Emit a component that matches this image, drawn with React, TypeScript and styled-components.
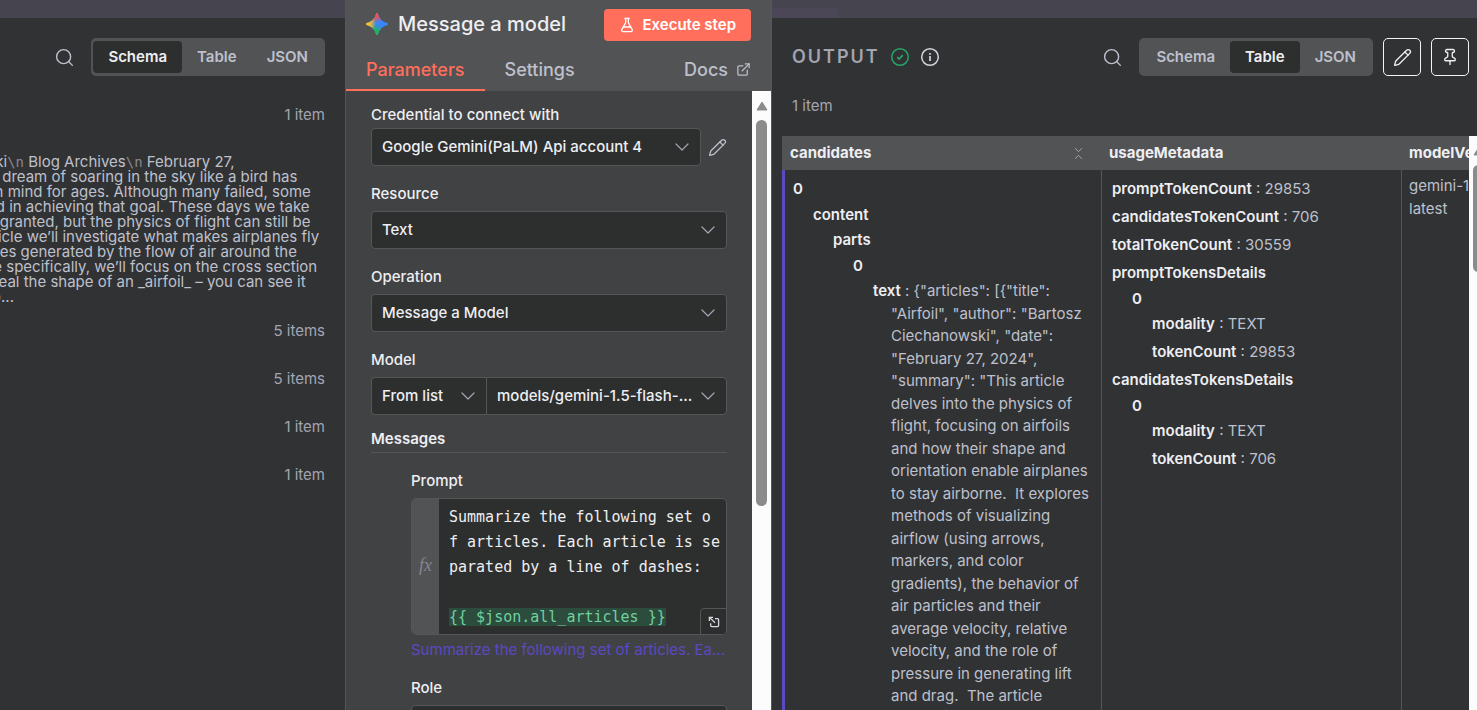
import React from "react";
import styled, { createGlobalStyle } from "styled-components";
import {
  ChevronDown,
  ChevronsDownUp,
  ExternalLink,
  FlaskConical,
  Pencil,
  Pin,
  Search,
} from "lucide-react";

const color = {
  canvas: "#45444f",
  panel: "#313234",
  node: "#414244",
  raised: "#525355",
  field: "#2d2e2e",
  line: "#555658",
  text: "#eeeef2",
  muted: "#bec0cc",
  faint: "#a3a5b1",
  primary: "#ff6f5c",
  purple: "#5b49c2",
};

const GlobalStyle = createGlobalStyle`
  * { box-sizing: border-box; }
  body {
    margin: 0;
    background: ${color.canvas};
    color: ${color.text};
    font: 400 15px/20px Inter, sans-serif;
    overflow: hidden;
  }
  button, select { font: inherit; color: inherit; }
`;

const Page = styled.main`
  display: flex;
  height: 100vh;
  overflow: hidden;
`;

const SidePanel = styled.section<{ $grow: number }>`
  flex: ${(p) => p.$grow} 1 0;
  min-width: 0;
  display: flex;
  flex-direction: column;
  overflow: hidden;
`;

const CanvasStrip = styled.div`
  flex: none;
  height: 18px;
  padding-top: 8px;
  background: ${color.canvas};
`;

const CanvasTab = styled.div`
  width: 67px;
  height: 10px;
  border-top-right-radius: 4px;
  background: #4b4757;
`;

const PanelBody = styled.div`
  flex: 1;
  min-height: 0;
  display: flex;
  flex-direction: column;
  background: ${color.panel};
`;

const Toolbar = styled.header`
  display: flex;
  align-items: center;
  justify-content: flex-end;
  gap: 10px;
  padding: 20px 20px 0 0;
`;

const OutputToolbar = styled(Toolbar)`
  padding: 20px 8px 0 20px;
`;

const OutputTitle = styled.h2`
  margin: 0;
  font-size: 18px;
  font-weight: 600;
  letter-spacing: 2px;
  color: ${color.faint};
`;

const Spacer = styled.div`
  flex: 1;
`;

const IconButton = styled.button<{ $outlined?: boolean }>`
  display: flex;
  align-items: center;
  justify-content: center;
  width: ${(p) => (p.$outlined ? 38 : 34)}px;
  height: 38px;
  padding: 0;
  border: 1px solid ${(p) => (p.$outlined ? "#f4f4f6" : "transparent")};
  border-radius: 5px;
  background: none;
  color: ${(p) => (p.$outlined ? color.text : color.muted)};
`;

const Segmented = styled.div`
  display: flex;
  padding: 3px 2px;
  border-radius: 5px;
  background: ${color.raised};
`;

const Segment = styled.button<{ $active?: boolean }>`
  height: 32px;
  padding: 0 15px;
  border: 0;
  border-radius: 4px;
  background: ${(p) => (p.$active ? color.field : "transparent")};
  color: ${(p) => (p.$active ? color.text : color.muted)};
  font-weight: 600;
`;

const InputContent = styled.div`
  display: flex;
  flex-direction: column;
  padding: 29px 20px 0 0;
`;

const ItemCount = styled.span`
  align-self: flex-end;
  color: ${color.faint};
`;

const Excerpt = styled.p`
  margin: 29px 0 17px -150px;
  line-height: 15px;
  white-space: pre;
  color: ${color.muted};
`;

const Escape = styled.span`
  color: #87888c;
  font: 14px/1px "DejaVu Sans Mono", monospace;
`;

const CountList = styled.ul`
  display: flex;
  flex-direction: column;
  gap: 28px;
  margin: 0;
  padding: 0;
  list-style: none;
`;

const CountRow = styled.li`
  display: flex;
  flex-direction: column;
`;

const NodePanel = styled.section`
  flex: 425 1 0;
  min-width: 0;
  display: flex;
  flex-direction: column;
  border: solid ${color.line};
  border-width: 0 1px;
  background: ${color.node};
`;

const NodeHeader = styled.header`
  background: ${color.raised};
`;

const TitleRow = styled.div`
  display: flex;
  align-items: center;
  justify-content: space-between;
  height: 50px;
  padding: 0 20px;
`;

const TitleGroup = styled.div`
  display: flex;
  align-items: center;
  gap: 10px;
  padding-bottom: 3px;
`;

const NodeTitle = styled.h1`
  margin: 0;
  font-size: 20px;
  line-height: 24px;
  font-weight: 500;
`;

const ExecuteButton = styled.button`
  display: flex;
  align-items: center;
  gap: 7px;
  height: 32px;
  padding: 0 15px;
  border: 0;
  border-radius: 4px;
  background: ${color.primary};
  color: #fff;
  font-weight: 600;
`;

const TabRow = styled.nav`
  display: flex;
  align-items: stretch;
  justify-content: space-between;
  height: 41px;
`;

const Tab = styled.a<{ $active?: boolean }>`
  display: flex;
  align-items: center;
  gap: 8px;
  padding: 0 20px;
  border-bottom: 2px solid ${(p) => (p.$active ? color.primary : "transparent")};
  color: ${(p) => (p.$active ? color.primary : color.muted)};
  font-size: 18px;
  font-weight: 500;
  text-decoration: none;
`;

const TabGroup = styled.div`
  display: flex;
`;

const NodeScroll = styled.div`
  flex: 1;
  min-height: 0;
  display: flex;
`;

const Form = styled.form`
  flex: 1;
  min-width: 0;
  display: flex;
  flex-direction: column;
  gap: 18px;
  padding: 14px 25px 0;
  overflow: hidden;
`;

const Field = styled.div<{ $gap?: number }>`
  flex: none;
  display: flex;
  flex-direction: column;
  gap: ${(p) => p.$gap ?? 7}px;
`;

const Label = styled.label`
  align-self: flex-start;
  font-weight: 500;
`;

const ControlRow = styled.div`
  display: flex;
  align-items: center;
`;

const SelectShell = styled.div<{ $width?: number; $join?: "left" | "right" }>`
  flex: ${(p) => (p.$width ? `0 0 ${p.$width}px` : "1 1 0")};
  min-width: 0;
  display: grid;
  align-items: center;
  height: 38px;
  border: 1px solid ${color.line};
  border-right-width: ${(p) => (p.$join === "left" ? 0 : 1)}px;
  border-radius: ${(p) =>
    p.$join === "left" ? "4px 0 0 4px" : p.$join === "right" ? "0 4px 4px 0" : "4px"};
  background: ${color.field};

  & > * { grid-area: 1 / 1; }
  & > svg {
    justify-self: end;
    margin-right: 6px;
    color: ${color.faint};
    pointer-events: none;
  }
`;

const NativeSelect = styled.select`
  appearance: none;
  width: 100%;
  height: 100%;
  padding: 0 30px 0 10px;
  border: 0;
  background: transparent;
  color: ${color.text};
  font-weight: 500;
  outline: none;
`;

const PencilButton = styled.button`
  display: flex;
  margin: 0 0 0 7px;
  padding: 0;
  border: 0;
  background: none;
  color: ${color.muted};
`;

const SectionTitle = styled.h3`
  flex: none;
  margin: -4px 0 0;
  padding-bottom: 3px;
  border-bottom: 1px solid ${color.line};
  font-size: 15px;
  line-height: 20px;
  font-weight: 600;
`;

const Nested = styled.div`
  display: flex;
  flex-direction: column;
  gap: 18px;
  padding-left: 40px;
`;

const EditorBox = styled.div`
  position: relative;
  display: flex;
  height: 137px;
  border: 1px solid ${color.line};
  border-radius: 5px;
  background: ${color.field};
  overflow: hidden;
`;

const Gutter = styled.div`
  flex: 0 0 27px;
  display: flex;
  align-items: center;
  justify-content: center;
  padding-bottom: 3px;
  background: ${color.raised};
  color: #858691;
  font: italic 18px/20px "Liberation Serif", serif;
`;

const Editor = styled.div`
  flex: 1;
  min-width: 0;
  padding: 6px 0 0 10px;
  font: 15px/25px "DejaVu Sans Mono", monospace;
  white-space: pre;
  outline: none;
`;

const Expression = styled.span`
  background: #2c4c3e;
  color: #71d0a0;
`;

const ExpandButton = styled.button`
  position: absolute;
  right: -1px;
  bottom: -1px;
  display: flex;
  align-items: center;
  justify-content: center;
  width: 27px;
  height: 27px;
  padding: 0;
  border: 1px solid ${color.line};
  border-top-left-radius: 4px;
  background: ${color.field};
`;

const Hint = styled.p`
  margin: -2px 0 0;
  overflow: hidden;
  white-space: nowrap;
  color: ${color.purple};
`;

const ScrollTrack = styled.div`
  flex: 0 0 19px;
  display: flex;
  flex-direction: column;
  align-items: center;
  padding-top: 10px;
  background: #fcfcfc;
`;

const ScrollThumb = styled.div<{ $size: number }>`
  width: 11px;
  height: ${(p) => p.$size}px;
  margin-top: 9px;
  border-radius: 6px;
  background: #8b8b8b;
`;

const OutputCount = styled.p`
  margin: 20px 0 20px 20px;
  color: ${color.faint};
`;

const TableArea = styled.div`
  flex: 1;
  min-height: 0;
  display: flex;
  margin-left: 10px;
`;

const TableClip = styled.div`
  flex: 1;
  min-width: 0;
  overflow: hidden;
`;

const ScrollClip = styled.div`
  flex: 0 0 8px;
  display: flex;
  overflow: hidden;
`;

const DataTable = styled.table`
  table-layout: fixed;
  width: 919px;
  height: 100%;
  border-collapse: separate;
  border-spacing: 0;
  line-height: 1.5;
`;

const HeadCell = styled.th`
  height: 34px;
  padding: 0 8px;
  background: ${color.raised};
  text-align: left;
  font-weight: 700;
`;

const HeadRow = styled.div`
  display: flex;
  align-items: center;
  justify-content: space-between;
  padding-right: 7px;

  svg { color: ${color.faint}; }
`;

const Cell = styled.td<{ $accent?: boolean }>`
  padding: 5px 8px 0 ${(p) => (p.$accent ? 5 : 7)}px;
  border-left: ${(p) => (p.$accent ? `3px solid ${color.purple}` : `1px solid ${color.line}`)};
  vertical-align: top;
  color: ${color.muted};
`;

const Branch = styled.div<{ $indent?: boolean }>`
  padding-left: ${(p) => (p.$indent ? 20 : 0)}px;
`;

const TreeKey = styled.div`
  padding: 3px 0 0 3px;
  color: ${color.text};
  font-weight: 600;
`;

const TreeLeaf = styled.div<{ $prose?: boolean }>`
  margin-left: 21px;
  padding: 3px 0;
  line-height: ${(p) => (p.$prose ? "inherit" : "22px")};
  text-indent: -18px;
  white-space: pre-wrap;

  b { color: ${color.text}; font-weight: 600; }
`;

const ARTICLE =
  '{"articles": [{"title": "Airfoil", "author": "Bartosz Ciechanowski", "date": "February 27, 2024", "summary": "This article delves into the physics of flight, focusing on airfoils and how their shape and orientation enable airplanes to stay airborne.  It explores methods of visualizing airflow (using arrows, markers, and color gradients), the behavior of air particles and their average velocity, relative velocity, and the role of pressure in generating lift and drag.  The article';

type TreeNode = { name: string; value?: string; children?: TreeNode[] };

const CANDIDATES: TreeNode[] = [
  {
    name: "0",
    children: [
      {
        name: "content",
        children: [
          {
            name: "parts",
            children: [{ name: "0", children: [{ name: "text", value: ARTICLE }] }],
          },
        ],
      },
    ],
  },
];

const USAGE: TreeNode[] = [
  { name: "promptTokenCount", value: "29853" },
  { name: "candidatesTokenCount", value: "706" },
  { name: "totalTokenCount", value: "30559" },
  {
    name: "promptTokensDetails",
    children: [
      {
        name: "0",
        children: [
          { name: "modality", value: "TEXT" },
          { name: "tokenCount", value: "29853" },
        ],
      },
    ],
  },
  {
    name: "candidatesTokensDetails",
    children: [
      {
        name: "0",
        children: [
          { name: "modality", value: "TEXT" },
          { name: "tokenCount", value: "706" },
        ],
      },
    ],
  },
];

function Tree({ nodes, indent }: { nodes: TreeNode[]; indent?: boolean }) {
  return (
    <Branch $indent={indent}>
      {nodes.map((node) =>
        node.children ? (
          <React.Fragment key={node.name}>
            <TreeKey>{node.name}</TreeKey>
            <Tree nodes={node.children} indent />
          </React.Fragment>
        ) : (
          <TreeLeaf key={node.name} $prose={(node.value ?? "").length > 40}>
            <b>{node.name}</b>
            {` : ${node.value}`}
          </TreeLeaf>
        )
      )}
    </Branch>
  );
}

function ViewSwitch({ active }: { active: string }) {
  return (
    <Segmented>
      {["Schema", "Table", "JSON"].map((view) => (
        <Segment key={view} type="button" $active={view === active}>
          {view}
        </Segment>
      ))}
    </Segmented>
  );
}

function Select(props: {
  id: string;
  value: string;
  label?: string;
  width?: number;
  join?: "left" | "right";
}) {
  return (
    <SelectShell $width={props.width} $join={props.join}>
      <NativeSelect id={props.id} aria-label={props.label}>
        <option>{props.value}</option>
      </NativeSelect>
      <ChevronDown size={24} strokeWidth={1.2} />
    </SelectShell>
  );
}

function Scrollbar({ size }: { size: number }) {
  return (
    <ScrollTrack>
      <svg width="12" height="10" viewBox="0 0 12 10">
        <path d="M6 1 11 9H1Z" fill="#8b8b8b" stroke="#8b8b8b" strokeLinejoin="round" />
      </svg>
      <ScrollThumb $size={size} />
    </ScrollTrack>
  );
}

function GeminiLogo() {
  const star = "M12 0Q14.2 9.8 24 12Q14.2 14.2 12 24Q9.8 14.2 0 12Q9.8 9.8 12 0Z";
  return (
    <svg width="22" height="22" viewBox="0 0 24 24" aria-hidden="true">
      <defs>
        <radialGradient id="gTop" gradientUnits="userSpaceOnUse" cx="10" cy="0" r="11">
          <stop offset="0.35" stopColor="#f0524a" />
          <stop offset="1" stopColor="#f0524a" stopOpacity="0" />
        </radialGradient>
        <radialGradient id="gLeft" gradientUnits="userSpaceOnUse" cx="0" cy="11" r="11">
          <stop offset="0.4" stopColor="#f6c026" />
          <stop offset="1" stopColor="#f6c026" stopOpacity="0" />
        </radialGradient>
        <radialGradient id="gBottom" gradientUnits="userSpaceOnUse" cx="9" cy="23" r="11">
          <stop offset="0.4" stopColor="#22b357" />
          <stop offset="1" stopColor="#22b357" stopOpacity="0" />
        </radialGradient>
      </defs>
      {["#3a86f7", "url(#gBottom)", "url(#gTop)", "url(#gLeft)"].map((fill) => (
        <path key={fill} d={star} fill={fill} stroke={fill} strokeWidth="1.4" strokeLinejoin="round" />
      ))}
    </svg>
  );
}

function SuccessIcon() {
  return (
    <svg width="20" height="20" viewBox="0 0 20 20" fill="none" stroke="#26a566" strokeWidth="1.5" role="img" aria-label="Success">
      <circle cx="10" cy="10" r="8.3" />
      <path d="m7.2 10.2 1.9 1.8 3.7-3.8" strokeWidth="1.7" />
    </svg>
  );
}

function InfoIcon() {
  return (
    <svg width="20" height="20" viewBox="0 0 20 20" fill="none" stroke="#d3d4dc" strokeWidth="1.5" role="img" aria-label="Info">
      <circle cx="10" cy="10" r="8.3" />
      <path d="M10 9v5M10 6v1.8" strokeWidth="1.7" />
    </svg>
  );
}

function ExpandIcon() {
  return (
    <svg width="12" height="12" viewBox="0 0 12 12" fill="none" stroke="#d8d9e0" strokeWidth="1.3" aria-hidden="true">
      <path d="M7 2.7h2.6a1 1 0 0 1 1 1v5.9a1 1 0 0 1-1 1H3.7a1 1 0 0 1-1-1V7.2" />
      <path d="M1.8 1.6 7 6.8M1.4 5V1.3h3.7" />
    </svg>
  );
}

function InputPanel() {
  return (
    <SidePanel $grow={345}>
      <CanvasStrip />
      <PanelBody>
        <Toolbar>
          <IconButton type="button" aria-label="Search input">
            <Search size={21} strokeWidth={1.6} />
          </IconButton>
          <ViewSwitch active="Schema" />
        </Toolbar>
        <InputContent>
          <ItemCount>1 item</ItemCount>
          <Excerpt>
            Bartosz Ciechanowski<Escape>\n</Escape> Blog Archives<Escape>\n</Escape> February 27,{"\n"}
            2024<Escape>\n</Escape> Airfoil<Escape>\n</Escape> The dream of soaring in the sky like a bird has{"\n"}
            captivated the human mind for ages. Although many failed, some{"\n"}
            eventually succeeded in achieving that goal. These days we take{"\n"}
            air transportation for granted, but the physics of flight can still be{"\n"}
            mystifying. In this article we’ll investigate what makes airplanes fly{"\n"}
            by looking at the forces generated by the flow of air around the{"\n"}
            aircraft’s wings. More specifically, we’ll focus on the cross section{"\n"}
            of those wings to reveal the shape of an _airfoil_ – you can see it{"\n"}
            presented in yellow b...
          </Excerpt>
          <CountList>
            {["5 items", "5 items", "1 item", "1 item"].map((count, i) => (
              <CountRow key={i}>
                <ItemCount>{count}</ItemCount>
              </CountRow>
            ))}
          </CountList>
        </InputContent>
      </PanelBody>
    </SidePanel>
  );
}

function ModelPanel() {
  return (
    <NodePanel>
      <NodeHeader>
        <TitleRow>
          <TitleGroup>
            <GeminiLogo />
            <NodeTitle>Message a model</NodeTitle>
          </TitleGroup>
          <ExecuteButton type="button">
            <FlaskConical size={16} />
            Execute step
          </ExecuteButton>
        </TitleRow>
        <TabRow>
          <TabGroup>
            <Tab href="#parameters" $active>
              Parameters
            </Tab>
            <Tab href="#settings">Settings</Tab>
          </TabGroup>
          <Tab href="#docs">
            Docs
            <ExternalLink size={15} />
          </Tab>
        </TabRow>
      </NodeHeader>
      <NodeScroll>
        <Form>
          <Field $gap={3}>
            <Label htmlFor="credential">Credential to connect with</Label>
            <ControlRow>
              <Select id="credential" value="Google Gemini(PaLM) Api account 4" />
              <PencilButton type="button" aria-label="Edit credential">
                <Pencil size={19} strokeWidth={1.6} />
              </PencilButton>
            </ControlRow>
          </Field>
          <Field>
            <Label htmlFor="resource">Resource</Label>
            <ControlRow>
              <Select id="resource" value="Text" />
            </ControlRow>
          </Field>
          <Field>
            <Label htmlFor="operation">Operation</Label>
            <ControlRow>
              <Select id="operation" value="Message a Model" />
            </ControlRow>
          </Field>
          <Field>
            <Label htmlFor="model">Model</Label>
            <ControlRow>
              <Select id="model-mode" label="Model source" value="From list" width={115} join="left" />
              <Select id="model" value="models/gemini-1.5-flash-..." join="right" />
            </ControlRow>
          </Field>
          <SectionTitle>Messages</SectionTitle>
          <Nested>
            <Field>
              <Label id="prompt-label">Prompt</Label>
              <EditorBox>
                <Gutter>fx</Gutter>
                <Editor
                  role="textbox"
                  aria-multiline="true"
                  aria-labelledby="prompt-label"
                  contentEditable
                  suppressContentEditableWarning
                  spellCheck={false}
                >
                  {"Summarize the following set o\nf articles. Each article is se\nparated by a line of dashes:\n\n"}
                  <Expression>{"{{ $json.all_articles }}"}</Expression>
                </Editor>
                <ExpandButton type="button" aria-label="Open editor">
                  <ExpandIcon />
                </ExpandButton>
              </EditorBox>
              <Hint>Summarize the following set of articles. Ea...</Hint>
            </Field>
            <Field>
              <Label htmlFor="role">Role</Label>
              <ControlRow>
                <Select id="role" value="User" />
              </ControlRow>
            </Field>
          </Nested>
        </Form>
        <Scrollbar size={386} />
      </NodeScroll>
    </NodePanel>
  );
}

function OutputPanel() {
  return (
    <SidePanel $grow={705}>
      <CanvasStrip>
        <CanvasTab />
      </CanvasStrip>
      <PanelBody>
        <OutputToolbar>
          <OutputTitle>OUTPUT</OutputTitle>
          <SuccessIcon />
          <InfoIcon />
          <Spacer />
          <IconButton type="button" aria-label="Search output">
            <Search size={21} strokeWidth={1.6} />
          </IconButton>
          <ViewSwitch active="Table" />
          <IconButton type="button" aria-label="Edit output" $outlined>
            <Pencil size={19} strokeWidth={1.7} />
          </IconButton>
          <IconButton type="button" aria-label="Pin data" $outlined>
            <Pin size={18} strokeWidth={1.8} />
          </IconButton>
        </OutputToolbar>
        <OutputCount>1 item</OutputCount>
        <TableArea>
          <TableClip>
            <DataTable>
              <colgroup>
                <col width="319" />
                <col width="300" />
                <col width="300" />
              </colgroup>
              <thead>
                <tr>
                  <HeadCell>
                    <HeadRow>
                      candidates
                      <ChevronsDownUp size={15} strokeWidth={1.6} />
                    </HeadRow>
                  </HeadCell>
                  <HeadCell>usageMetadata</HeadCell>
                  <HeadCell>modelVersion</HeadCell>
                </tr>
              </thead>
              <tbody>
                <tr>
                  <Cell $accent>
                    <Tree nodes={CANDIDATES} />
                  </Cell>
                  <Cell>
                    <Tree nodes={USAGE} />
                  </Cell>
                  <Cell>
                    gemini-1.5-flash-
                    <br />
                    latest
                  </Cell>
                </tr>
              </tbody>
            </DataTable>
          </TableClip>
          <ScrollClip>
            <Scrollbar size={107} />
          </ScrollClip>
        </TableArea>
      </PanelBody>
    </SidePanel>
  );
}

export default function App() {
  return (
    <>
      <GlobalStyle />
      <Page>
        <InputPanel />
        <ModelPanel />
        <OutputPanel />
      </Page>
    </>
  );
}
